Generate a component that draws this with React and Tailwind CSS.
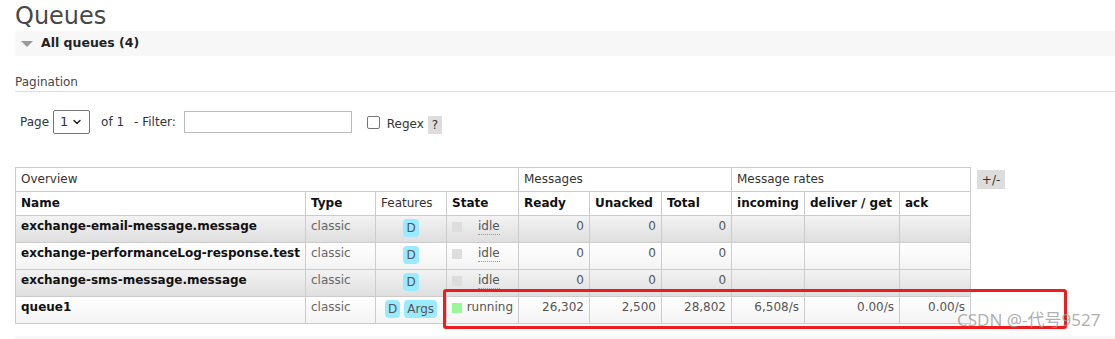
import { ChevronDown } from "lucide-react";

const rows = [
  { name: "exchange-email-message.message", feats: ["D"], state: "idle", ready: "0", unacked: "0", total: "0", rates: ["", "", ""], alt: true },
  { name: "exchange-performanceLog-response.test", feats: ["D"], state: "idle", ready: "0", unacked: "0", total: "0", rates: ["", "", ""], alt: false },
  { name: "exchange-sms-message.message", feats: ["D"], state: "idle", ready: "0", unacked: "0", total: "0", rates: ["", "", ""], alt: true },
  { name: "queue1", feats: ["D", "Args"], state: "running", ready: "26,302", unacked: "2,500", total: "28,802", rates: ["6,508/s", "0.00/s", "0.00/s"], alt: false },
];

const cell = "border border-[#cccccc] px-[5px]";
const td = `${cell} align-top pt-[3px]`;
const th = `${cell} align-middle`;

export default function App() {
  return (
    <div className="relative h-[339px] w-[1115px] overflow-hidden bg-white pl-[15px] text-[12px] text-[#484848]" style={{ fontFamily: '"DejaVu Sans", Verdana, sans-serif' }}>
      <h1 className="pt-[2px] text-[24px] leading-[28px] font-normal text-[#484848]">Queues</h1>

      {/* section header */}
      <div className="mt-[1px] flex h-[25px] items-center bg-[#f7f7f7] pl-[6px]">
        <span className="mr-[8px] inline-block h-0 w-0 border-x-[6px] border-t-[6px] border-x-transparent border-t-[#999]" />
        <span className="text-[12.5px] font-bold text-[#222]">All queues (4)</span>
      </div>

      <div className="mt-[19px] border-b border-[#dddddd] pb-[1px] text-[12px] leading-[15px] text-[#484848]">Pagination</div>

      {/* paging row */}
      <div className="mt-[18px] flex h-[24px] items-center pl-[5px] text-[12px] text-[#333]">
        <span>Page</span>
        <div className="ml-[4px] flex h-[24px] w-[37px] items-center justify-between rounded-[2px] border border-[#767676] px-[6px] text-[13px]">
          <span>1</span>
          <ChevronDown size={12} strokeWidth={3} className="text-[#222]" />
        </div>
        <span className="ml-[11px]">of 1</span>
        <span className="ml-[10px]">- Filter:</span>
        <div className="ml-[8px] h-[22px] w-[168px] border border-[#bbbbbb] bg-white" />
        <div className="ml-[15px] h-[13px] w-[13px] rounded-[2px] border border-[#767676]" />
        <span className="ml-[7px] mt-[4px]">Regex</span>
        <span className="ml-[4px] mt-[6px] flex h-[18px] w-[14px] items-center justify-center bg-[#dddddd] text-[12px]">?</span>
      </div>

      {/* table */}
      <div className="mt-[33px] flex items-start">
        <table className="w-[955px] table-fixed border-collapse text-[12px] leading-[15px]">
          <colgroup>
            <col className="w-[290px]" />
            <col className="w-[70px]" />
            <col className="w-[71px]" />
            <col className="w-[72px]" />
            <col className="w-[71px]" />
            <col className="w-[72px]" />
            <col className="w-[70px]" />
            <col className="w-[73px]" />
            <col className="w-[95px]" />
            <col className="w-[71px]" />
          </colgroup>
          <thead>
            <tr className="h-[24px] text-left">
              <th colSpan={4} className={`${th} font-normal text-[#333]`}>Overview</th>
              <th colSpan={3} className={`${th} font-normal text-[#333]`}>Messages</th>
              <th colSpan={3} className={`${th} font-normal text-[#333]`}>Message rates</th>
            </tr>
            <tr className="h-[24px] text-left text-[#111]">
              <th className={`${th} font-bold`}>Name</th>
              <th className={`${th} font-bold`}>Type</th>
              <th className={`${th} font-normal text-[#333]`}>Features</th>
              <th className={`${th} font-bold`}>State</th>
              <th className={`${th} font-bold`}>Ready</th>
              <th className={`${th} font-bold`}>Unacked</th>
              <th className={`${th} font-bold`}>Total</th>
              <th className={`${th} font-bold`}>incoming</th>
              <th className={`${th} font-bold`}>deliver / get</th>
              <th className={`${th} font-bold`}>ack</th>
            </tr>
          </thead>
          <tbody>
            {rows.map((r) => (
              <tr key={r.name} className={`h-[27px] ${r.alt ? "bg-gradient-to-b from-[#f3f3f3] to-[#dedede]" : "bg-gradient-to-b from-white to-[#f3f3f3]"}`}>
                <td className={`${td} font-bold text-[#111]`}>{r.name}</td>
                <td className={`${td} text-[#666]`}>classic</td>
                <td className={`${td} text-center`}>
                  <div className="flex justify-center gap-[4px]">
                    {r.feats.map((f) => (
                      <span key={f} className="inline-flex h-[18px] items-center rounded-[4px] bg-[#99ebff] px-[3px] leading-[18px] text-[#555]">{f}</span>
                    ))}
                  </div>
                </td>
                <td className={td}>
                  <div className="flex items-start">
                    <span className={`mt-[3px] inline-block h-[10px] w-[10px] ${r.state === "idle" ? "bg-[#dddddd]" : "bg-[#98f898]"}`} />
                    {r.state === "idle" ? (
                      <span className="ml-[16px] border-b border-dotted border-[#999] text-[#555]">idle</span>
                    ) : (
                      <span className="ml-[5px] text-[#555]">running</span>
                    )}
                  </div>
                </td>
                <td className={`${td} text-right text-[#555]`}>{r.ready}</td>
                <td className={`${td} text-right text-[#555]`}>{r.unacked}</td>
                <td className={`${td} text-right text-[#555]`}>{r.total}</td>
                {r.rates.map((v, i) => (
                  <td key={i} className={`${td} text-right text-[#555]`}>{v}</td>
                ))}
              </tr>
            ))}
          </tbody>
        </table>
        <span className="ml-[6px] mt-[3px] flex h-[19px] w-[28px] items-center justify-center bg-[#dddddd] text-[12px] text-[#333]">+/-</span>
      </div>

      <div className="mt-[12px] h-[10px] bg-[#f7f7f7]" />

      {/* annotation overlay */}
      <div className="absolute left-[443px] top-[289px] h-[40px] w-[624px] rounded-[3px] border-[3px] border-[#ee1c1c]" />
      <div className="absolute left-[957px] top-[310px] text-[17px] leading-[20px] text-[#9a9a9a]/80" style={{ fontFamily: '"Noto Sans", "Noto Sans CJK SC", sans-serif' }}>
        CSDN @-代号9527
      </div>
    </div>
  );
}
